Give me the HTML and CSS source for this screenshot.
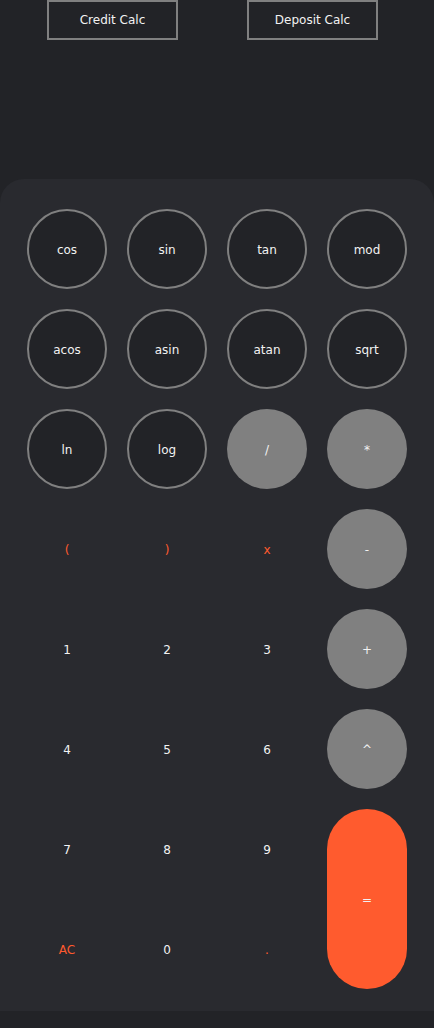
FILE: index.html
```html
<!DOCTYPE html>
<html>
<head>
<meta charset="utf-8">
<link rel="stylesheet" href="styles.css">
</head>
<body>
<header class="top">
  <button class="mode">Credit Calc</button>
  <button class="mode">Deposit Calc</button>
</header>
<main class="panel">
  <div class="keys">
    <button class="key fn">cos</button>
    <button class="key fn">sin</button>
    <button class="key fn">tan</button>
    <button class="key fn">mod</button>
    <button class="key fn">acos</button>
    <button class="key fn">asin</button>
    <button class="key fn">atan</button>
    <button class="key fn">sqrt</button>
    <button class="key fn">ln</button>
    <button class="key fn">log</button>
    <button class="key op">/</button>
    <button class="key op">*</button>
    <button class="key accent">(</button>
    <button class="key accent">)</button>
    <button class="key accent">x</button>
    <button class="key op">-</button>
    <button class="key">1</button>
    <button class="key">2</button>
    <button class="key">3</button>
    <button class="key op">+</button>
    <button class="key">4</button>
    <button class="key">5</button>
    <button class="key">6</button>
    <button class="key op">^</button>
    <button class="key">7</button>
    <button class="key">8</button>
    <button class="key">9</button>
    <button class="key eq">=</button>
    <button class="key accent">AC</button>
    <button class="key">0</button>
    <button class="key accent">.</button>
  </div>
</main>
</body>
</html>
```
FILE: styles.css
```css
html, body {
  margin: 0;
  padding: 0;
  background: #222327;
  font-family: "DejaVu Sans", sans-serif;
  font-size: 12px;
  color: #f2f2f2;
}
button {
  font-family: inherit;
  font-size: 12px;
  cursor: pointer;
}
.top {
  display: flex;
  gap: 69px;
  padding-left: 47px;
  height: 179px;
}
.mode {
  width: 131px;
  height: 40px;
  background: #222327;
  border: 2px solid #808080;
  color: #f2f2f2;
  padding: 0;
}
.panel {
  background: #292a2f;
  border-radius: 24px 24px 0 0;
  padding: 30px 0 22px;
}
.keys {
  display: grid;
  grid-template-columns: repeat(4, 80px);
  grid-auto-rows: 80px;
  gap: 20px;
  justify-content: center;
}
.key {
  border: none;
  border-radius: 50%;
  background: transparent;
  color: #f2f2f2;
  padding: 2px 0 0;
}
.fn {
  background: #222327;
  border: 2px solid #808080;
}
.op {
  background: #808080;
}
.accent {
  color: #ff5a2e;
}
.eq {
  grid-column: 4;
  grid-row: 7 / span 2;
  background: #ff5b2e;
  border-radius: 40px;
}
```
